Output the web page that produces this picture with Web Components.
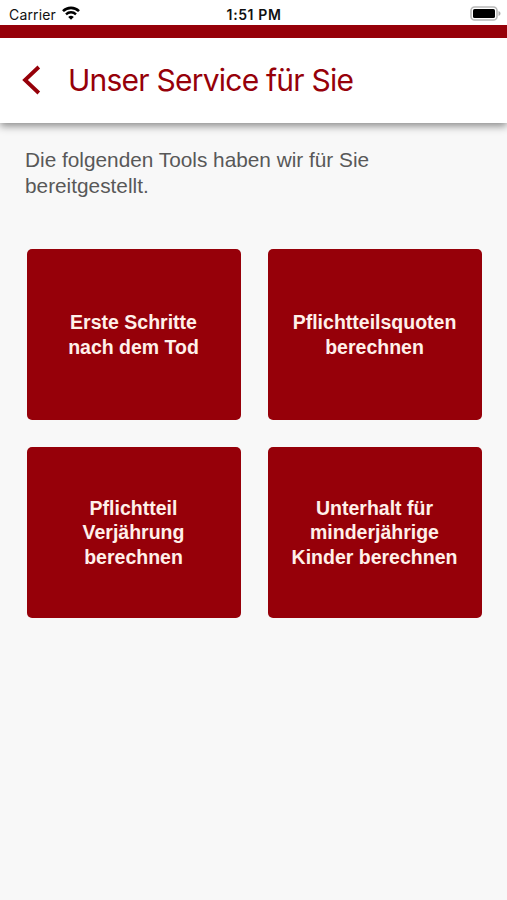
<!DOCTYPE html>
<html lang="de">
<head>
<meta charset="utf-8">
<meta name="viewport" content="width=device-width, initial-scale=1">
<title>Unser Service für Sie</title>
<style>
  body {
    margin: 0;
    background: #f8f8f8;
    font-family: "Liberation Sans", Arial, sans-serif;
  }
</style>
</head>
<body>
<service-page>
  <status-bar slot="top" carrier="Carrier" time="1:51 PM"></status-bar>
  <title-bar slot="top">Unser Service für Sie</title-bar>
  <span slot="intro">Die folgenden Tools haben wir für Sie bereitgestellt.</span>
  <service-tile>Erste Schritte<br>nach dem Tod</service-tile>
  <service-tile>Pflichtteilsquoten<br>berechnen</service-tile>
  <service-tile>Pflichtteil<br>Verjährung<br>berechnen</service-tile>
  <service-tile>Unterhalt für<br>minderjährige<br>Kinder berechnen</service-tile>
</service-page>

<script>
const statusTemplate = document.createElement("template");
statusTemplate.innerHTML = `
<style>
:host {
  display: grid;
  grid-template-columns: 1fr auto 1fr;
  align-items: center;
  height: 25px;
  padding: 0 6px 0 9px;
  box-sizing: border-box;
  background: #fff;
  color: #111;
  font: 14px/25px Inter, sans-serif;
}
.left {
  display: flex;
  align-items: center;
  gap: 6px;
  padding-top: 2px;
}
.carrier {
  letter-spacing: 0.15px;
}
.time {
  font-weight: 600;
  padding: 1px 2px 0 0;
  letter-spacing: 0.6px;
}
.battery {
  justify-self: end;
  display: block;
}
.wifi {
  display: block;
  margin-top: -3px;
}
</style>
<div class="left">
  <span class="carrier"></span>
  <svg class="wifi" width="18" height="14" viewBox="0 0 18 14" fill="none" stroke="#000">
    <path d="M1 5.1a11.5 11.5 0 0 1 16 0" stroke-width="2.6"/>
    <path d="M4 8.3a7.200 7.200 0 0 1 10 0" stroke-width="2.4"/>
    <path d="M9 13.8 6.200 11a4 4 0 0 1 5.600 0z" fill="#000" stroke="none"/>
  </svg>
</div>
<span class="time"></span>
<svg class="battery" width="31" height="15" viewBox="0 0 31 15">
  <rect x="1" y="1" width="26" height="13" rx="3.6" fill="#fff" stroke="#b8b8b8" stroke-width="1.6"/>
  <rect x="3" y="3" width="22" height="9" rx="1.6" fill="#000"/>
  <path d="M28.500 5v5c1.200-.5 2-1.400 2-2.500s-.8-2-2-2.500z" fill="#aaa"/>
</svg>
`;
class StatusBar extends HTMLElement {
  constructor() {
    super();
    this.attachShadow({ mode: "open" });
    this.shadowRoot.appendChild(statusTemplate.content.cloneNode(true));
  }

  connectedCallback() {
    this.shadowRoot.querySelector(".carrier").textContent = this.getAttribute("carrier");
    this.shadowRoot.querySelector(".time").textContent = this.getAttribute("time");
  }
}
window.customElements.define("status-bar", StatusBar);

const titleTemplate = document.createElement("template");
titleTemplate.innerHTML = `
<style>
:host {
  display: flex;
  align-items: center;
  height: 98px;
  box-sizing: border-box;
  border-top: 13px solid #960009;
  padding-left: 22px;
  background: #fff;
  color: #960009;
  box-shadow: 0 3px 8px rgba(0, 0, 0, 0.45);
  clip-path: inset(0 0 -20px 0);
}
svg {
  display: block;
  margin: -1px 27px 0 0;
}
h1 {
  margin: -2px 0 0;
  font: 400 30px/36px Inter, sans-serif;
  letter-spacing: -0.77px;
}
</style>
<svg width="19" height="30" viewBox="0 0 19 30" fill="none" stroke="currentColor" stroke-width="3.8">
  <path d="M16.800 2 3 15l13.800 13"/>
</svg>
<h1><slot></slot></h1>
`;
class TitleBar extends HTMLElement {
  constructor() {
    super();
    this.attachShadow({ mode: "open" });
    this.shadowRoot.appendChild(titleTemplate.content.cloneNode(true));
  }
}
window.customElements.define("title-bar", TitleBar);

const tileTemplate = document.createElement("template");
tileTemplate.innerHTML = `
<style>
:host {
  display: flex;
  align-items: center;
  justify-content: center;
  border-radius: 5px;
  background: #960009;
  color: #fff0ea;
  font-size: 19.5px;
  font-weight: bold;
  line-height: 24.5px;
  text-align: center;
}
</style>
<div><slot></slot></div>
`;
class ServiceTile extends HTMLElement {
  constructor() {
    super();
    this.attachShadow({ mode: "open" });
    this.shadowRoot.appendChild(tileTemplate.content.cloneNode(true));
  }
}
window.customElements.define("service-tile", ServiceTile);

const pageTemplate = document.createElement("template");
pageTemplate.innerHTML = `
<style>
:host {
  display: block;
  min-height: 100vh;
}
p {
  margin: 0;
  padding: 24px 100px 0 25px;
  color: #585858;
  font-size: 20.8px;
  line-height: 26px;
}
.tiles {
  display: grid;
  grid-template-columns: 1fr 1fr;
  grid-auto-rows: 171px;
  gap: 27px;
  padding: 50px 25.5px 0 26.5px;
}
</style>
<slot name="top"></slot>
<p><slot name="intro"></slot></p>
<div class="tiles"><slot></slot></div>
`;
class ServicePage extends HTMLElement {
  constructor() {
    super();
    this.attachShadow({ mode: "open" });
    this.shadowRoot.appendChild(pageTemplate.content.cloneNode(true));
  }
}
window.customElements.define("service-page", ServicePage);
</script>
</body>
</html>
